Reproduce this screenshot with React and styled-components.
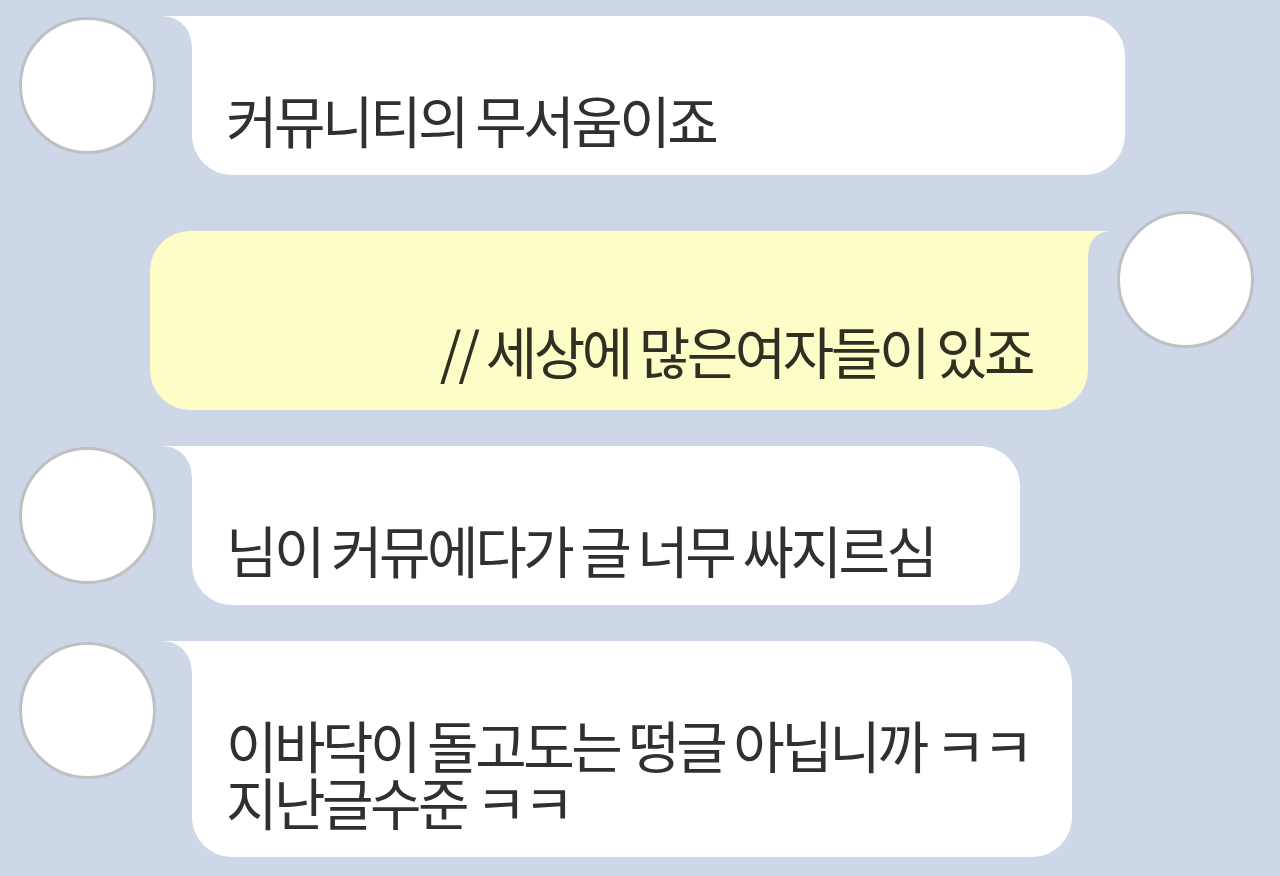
import React from 'react'
import styled, { createGlobalStyle } from 'styled-components'

const GlobalStyle = createGlobalStyle`
  html, body {
    margin: 0;
    padding: 0;
    background: #ced7e8;
  }
  body {
    font-family: "Noto Sans CJK KR", "Noto Sans", sans-serif;
  }
`

const messages = [
  { id: 1, mine: false, width: 933, lines: ['커뮤니티의 무서움이죠'] },
  { id: 2, mine: true, width: 938, lines: ['// 세상에 많은여자들이 있죠'] },
  { id: 3, mine: false, width: 828, lines: ['님이 커뮤에다가 글 너무 싸지르심'] },
  { id: 4, mine: false, width: 880, lines: ['이바닥이 돌고도는 떵글 아닙니까 ㅋㅋ', '지난글수준 ㅋㅋ'] },
]

function App() {
  return (
    <>
      <GlobalStyle />
      <ChatRoom>
        {messages.map((m) => (
          <Row key={m.id} mine={m.mine}>
            <Avatar mine={m.mine} />
            <Bubble mine={m.mine} width={m.width}>
              {m.lines.map((line, i) => (
                <Line key={i}>{line}</Line>
              ))}
            </Bubble>
          </Row>
        ))}
      </ChatRoom>
    </>
  )
}

export default App

const ChatRoom = styled.div`
  width: 1280px;
  height: 876px;
  box-sizing: border-box;
  padding: 16px 26px 0 19px;
  display: flex;
  flex-direction: column;
  gap: 36px;
  background: #ced7e8;
  overflow: hidden;
`

const Row = styled.div`
  display: flex;
  flex-direction: ${(p) => (p.mine ? 'row-reverse' : 'row')};
  align-items: flex-start;
  gap: ${(p) => (p.mine ? '29px' : '36px')};
`

const Avatar = styled.div`
  flex: none;
  width: 137px;
  height: 137px;
  box-sizing: border-box;
  border-radius: 50%;
  background: #ffffff;
  border: 3px solid #bfc0c3;
  margin-top: ${(p) => (p.mine ? '0' : '1px')};
`

const Bubble = styled.div`
  position: relative;
  flex: none;
  width: ${(p) => p.width}px;
  box-sizing: border-box;
  margin-top: ${(p) => (p.mine ? '20px' : '0')};
  padding: ${(p) => (p.mine ? '90px 56px 32px 34px' : '74px 34px 28px 34px')};
  background: ${(p) => (p.mine ? '#fdfdc8' : '#ffffff')};
  color: ${(p) => (p.mine ? '#2f2f22' : '#303030')};
  border-radius: ${(p) => (p.mine ? '40px 0 40px 40px' : '0 40px 40px 40px')};
  text-align: ${(p) => (p.mine ? 'right' : 'left')};

  &::before {
    content: '';
    position: absolute;
    top: 0;
    ${(p) => (p.mine ? 'right: -21px;' : 'left: -28px;')}
    width: ${(p) => (p.mine ? '21px' : '28px')};
    height: ${(p) => (p.mine ? '23px' : '30px')};
    background: ${(p) =>
      p.mine
        ? 'radial-gradient(21px 23px at 100% 100%, transparent 97%, #fdfdc8 100%)'
        : 'radial-gradient(28px 30px at 0 100%, transparent 97%, #ffffff 100%)'};
  }
`

const Line = styled.div`
  font-size: 56px;
  line-height: 57px;
  letter-spacing: -3.5px;
  font-weight: 400;
  white-space: nowrap;
`
